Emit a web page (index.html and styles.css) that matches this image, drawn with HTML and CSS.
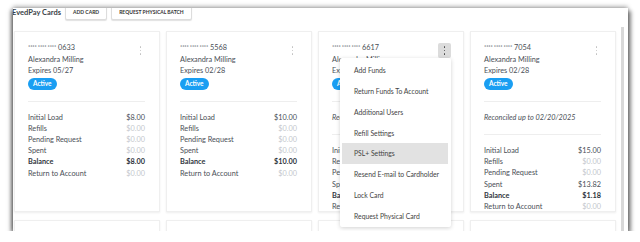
FILE: index.html
```html
<!DOCTYPE html>
<html>
<head>
<meta charset="UTF-8">
<title>EvedPay Cards</title>
<link rel="stylesheet" href="styles.css">
</head>
<body>
	<div class="frame">
		<div class="toolbar">
			<span class="title">EvedPay Cards</span>
			<button class="btn">Add Card</button>
			<button class="btn">Request Physical Batch</button>
		</div>
		<div class="cards">
			<!-- card 0633 -->
			<div class="card">
				<div class="head">
					<div>
						<div class="num"><span class="stars">**** **** ****</span> 0633</div>
						<div>Alexandra Milling</div>
						<div>Expires 05/27</div>
						<span class="badge">Active</span>
					</div>
					<span class="kebab"><i></i><i></i><i></i></span>
				</div>
				<div class="sep"></div>
				<div class="row"><span>Initial Load</span><span>$8.00</span></div>
				<div class="row"><span>Refills</span><span class="zero">$0.00</span></div>
				<div class="row"><span>Pending Request</span><span class="zero">$0.00</span></div>
				<div class="row"><span>Spent</span><span class="zero">$0.00</span></div>
				<div class="row bold"><span>Balance</span><span>$8.00</span></div>
				<div class="row"><span>Return to Account</span><span class="zero">$0.00</span></div>
			</div>
			<!-- card 5568 -->
			<div class="card">
				<div class="head">
					<div>
						<div class="num"><span class="stars">**** **** ****</span> 5568</div>
						<div>Alexandra Milling</div>
						<div>Expires 02/28</div>
						<span class="badge">Active</span>
					</div>
					<span class="kebab"><i></i><i></i><i></i></span>
				</div>
				<div class="sep"></div>
				<div class="row"><span>Initial Load</span><span>$10.00</span></div>
				<div class="row"><span>Refills</span><span class="zero">$0.00</span></div>
				<div class="row"><span>Pending Request</span><span class="zero">$0.00</span></div>
				<div class="row"><span>Spent</span><span class="zero">$0.00</span></div>
				<div class="row bold"><span>Balance</span><span>$10.00</span></div>
				<div class="row"><span>Return to Account</span><span class="zero">$0.00</span></div>
			</div>
			<!-- card 6617, menu open -->
			<div class="card">
				<div class="head">
					<div>
						<div class="num"><span class="stars">**** **** ****</span> 6617</div>
						<div>Alexandra Milling</div>
						<div>Expires 02/28</div>
						<span class="badge">Active</span>
					</div>
					<span class="kebab open"><i></i><i></i><i></i></span>
				</div>
				<div class="sep"></div>
				<div class="note">Reconciled up to 02/20/2025</div>
				<div class="sep"></div>
				<div class="row"><span>Initial Load</span><span>$15.00</span></div>
				<div class="row"><span>Refills</span><span class="zero">$0.00</span></div>
				<div class="row"><span>Pending Request</span><span class="zero">$0.00</span></div>
				<div class="row"><span>Spent</span><span>$13.82</span></div>
				<div class="row bold"><span>Balance</span><span>$1.18</span></div>
				<div class="row"><span>Return to Account</span><span class="zero">$0.00</span></div>
				<ul class="menu">
					<li>Add Funds</li>
					<li>Return Funds To Account</li>
					<li>Additional Users</li>
					<li>Refill Settings</li>
					<li class="hover">PSL+ Settings</li>
					<li>Resend E-mail to Cardholder</li>
					<li>Lock Card</li>
					<li>Request Physical Card</li>
				</ul>
			</div>
			<!-- card 7054 -->
			<div class="card">
				<div class="head">
					<div>
						<div class="num"><span class="stars">**** **** ****</span> 7054</div>
						<div>Alexandra Milling</div>
						<div>Expires 02/28</div>
						<span class="badge">Active</span>
					</div>
					<span class="kebab"><i></i><i></i><i></i></span>
				</div>
				<div class="sep"></div>
				<div class="note">Reconciled up to 02/20/2025</div>
				<div class="sep"></div>
				<div class="row"><span>Initial Load</span><span>$15.00</span></div>
				<div class="row"><span>Refills</span><span class="zero">$0.00</span></div>
				<div class="row"><span>Pending Request</span><span class="zero">$0.00</span></div>
				<div class="row"><span>Spent</span><span>$13.82</span></div>
				<div class="row bold"><span>Balance</span><span>$1.18</span></div>
				<div class="row"><span>Return to Account</span><span class="zero">$0.00</span></div>
			</div>
			<div class="card"></div>
			<div class="card"></div>
			<div class="card"></div>
			<div class="card"></div>
		</div>
		<div class="scroll"></div>
	</div>
</body>
</html>
```

FILE: styles.css
```css
body{
	margin: 0;
	background: #fff;
	font-family: "Lato", "Liberation Sans", sans-serif;
	font-size: 7.3px;
	color: #4a4f57;
}
.frame{
	position: relative;
	width: 615px;
	height: 223px;
	margin: 8px 0 0 13px;
	overflow: hidden;
	background: #fff;
	box-shadow: -2px 2px 4px rgba(0,0,0,0.55), 3px 3px 4px rgba(0,0,0,0.45), 0 -2px 4px rgba(0,0,0,0.25);
}
.toolbar{
	display: flex;
	align-items: center;
	gap: 4px;
	height: 16px;
	margin-top: -4px;
}
.title{
	font-weight: bold;
	font-size: 7.5px;
	color: #3a3f47;
	margin-left: -1px;
}
.btn{
	font-family: inherit;
	font-size: 5px;
	font-weight: bold;
	text-transform: uppercase;
	color: #333;
	background: #fff;
	border: 1px solid #ddd;
	border-radius: 2px;
	box-shadow: 0 1px 1px rgba(0,0,0,0.12);
	height: 15px;
	padding: 0 7px;
}
.cards{
	display: grid;
	grid-template-columns: repeat(4, 146px);
	grid-template-rows: 181px 40px;
	column-gap: 6px;
	row-gap: 8px;
	margin: 11px 0 0 1px;
}
.card{
	position: relative;
	background: #fff;
	border: 1px solid #efefef;
	box-shadow: 0 1px 2px rgba(0,0,0,0.07);
	padding: 10px 14px 0 13px;
	line-height: 11.5px;
}
.head{
	display: flex;
	justify-content: space-between;
	align-items: flex-start;
}
.stars{
	font-size: 5.5px;
	letter-spacing: -0.2px;
	vertical-align: 1px;
}
.badge{
	display: inline-block;
	margin-top: 1px;
	background: #1a9ef2;
	color: #fff;
	font-weight: bold;
	font-size: 6.5px;
	line-height: 12px;
	padding: 0 5px;
	border-radius: 7px;
}
.kebab{
	display: flex;
	flex-direction: column;
	align-items: center;
	justify-content: center;
	gap: 1.7px;
	width: 13px;
	height: 15px;
	margin: 1px -2px 0 0;
	border-radius: 2px;
}
.kebab i{
	display: block;
	width: 1.6px;
	height: 1.6px;
	border-radius: 50%;
	background: #c0c0c0;
}
.kebab.open{
	background: #dcdcdc;
}
.kebab.open i{
	background: #444;
}
.sep{
	border-top: 1px solid #eee;
	margin: 11px 0 10px;
}
.note{
	font-style: italic;
	font-synthesis: style;
}
.row{
	display: flex;
	justify-content: space-between;
	line-height: 11.2px;
}
.row.bold{
	font-weight: bold;
	color: #2f3640;
}
.zero{
	color: #c4c7cc;
}
.menu{
	position: absolute;
	left: 21px;
	top: 26px;
	width: 111px;
	margin: 0;
	padding: 2px 0 0;
	list-style: none;
	background: #fff;
	box-shadow: 0 1px 4px rgba(0,0,0,0.18);
	border-radius: 2px;
	z-index: 2;
	font-size: 6.8px;
}
.menu li{
	height: 20.85px;
	line-height: 20.85px;
	padding-left: 12px;
	margin: 0 3px 0 2px;
	color: #444;
	white-space: nowrap;
}
.menu li.hover{
	background: #e2e2e2;
}
.scroll{
	position: absolute;
	right: 4px;
	top: 19px;
	width: 3px;
	height: 210px;
	background: #d8d8d8;
}
```
